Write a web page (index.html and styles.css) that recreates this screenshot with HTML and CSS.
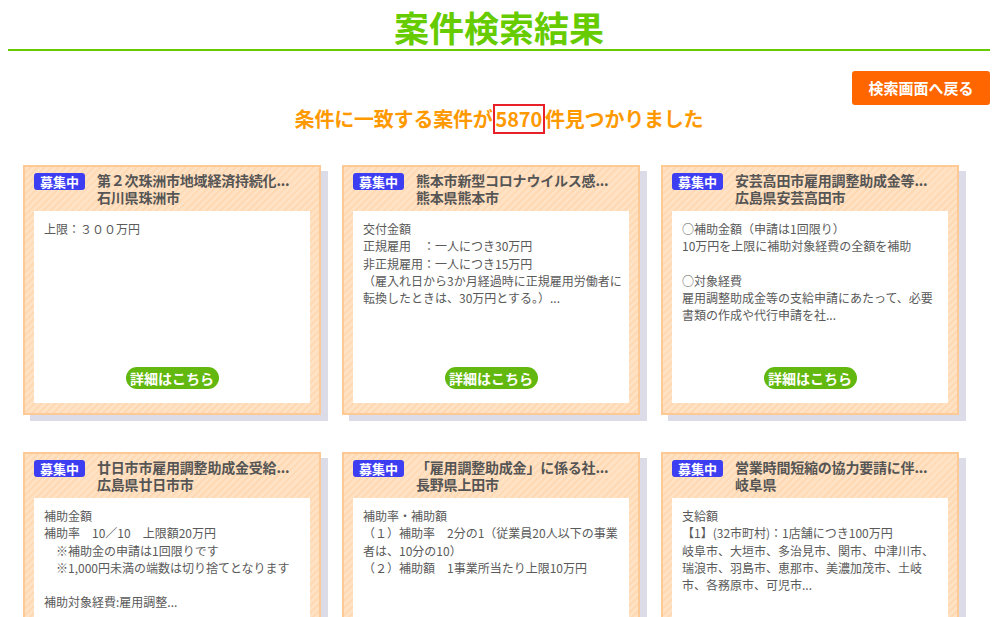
FILE: index.html
```html
<!DOCTYPE html>
<html lang="ja">
<head>
<meta charset="utf-8">
<title>案件検索結果</title>
<link rel="stylesheet" href="styles.css">
</head>
<body>
<div class="page">
  <h1 class="page-title">案件検索結果</h1>
  <div class="actions"><a class="back-btn" href="#">検索画面へ戻る</a></div>
  <p class="count">条件に一致する案件が<span class="num">5870</span>件見つかりました</p>

  <div class="grid">
    <div class="card">
      <div class="card-head">
        <span class="badge">募集中</span>
        <div class="card-title">第２次珠洲市地域経済持続化...<br>石川県珠洲市</div>
      </div>
      <div class="card-body">
        <div class="text">
          <div>上限：３００万円</div>
        </div>
        <a class="detail" href="#">詳細はこちら</a>
      </div>
    </div>

    <div class="card">
      <div class="card-head">
        <span class="badge">募集中</span>
        <div class="card-title">熊本市新型コロナウイルス感...<br>熊本県熊本市</div>
      </div>
      <div class="card-body">
        <div class="text">
          <div>交付金額</div>
          <div>正規雇用　：一人につき30万円</div>
          <div>非正規雇用：一人につき15万円</div>
          <div>（雇入れ日から3か月経過時に正規雇用労働者に</div>
          <div>転換したときは、30万円とする。）...</div>
        </div>
        <a class="detail" href="#">詳細はこちら</a>
      </div>
    </div>

    <div class="card">
      <div class="card-head">
        <span class="badge">募集中</span>
        <div class="card-title">安芸高田市雇用調整助成金等...<br>広島県安芸高田市</div>
      </div>
      <div class="card-body">
        <div class="text">
          <div>○補助金額（申請は1回限り）</div>
          <div>10万円を上限に補助対象経費の全額を補助</div>
          <div>&nbsp;</div>
          <div>○対象経費</div>
          <div>雇用調整助成金等の支給申請にあたって、必要</div>
          <div>書類の作成や代行申請を社...</div>
        </div>
        <a class="detail" href="#">詳細はこちら</a>
      </div>
    </div>

    <div class="card">
      <div class="card-head">
        <span class="badge">募集中</span>
        <div class="card-title">廿日市市雇用調整助成金受給...<br>広島県廿日市市</div>
      </div>
      <div class="card-body">
        <div class="text">
          <div>補助金額</div>
          <div>補助率　10／10　上限額20万円</div>
          <div>　※補助金の申請は1回限りです</div>
          <div>　※1,000円未満の端数は切り捨てとなります</div>
          <div>&nbsp;</div>
          <div>補助対象経費:雇用調整...</div>
        </div>
        <a class="detail" href="#">詳細はこちら</a>
      </div>
    </div>

    <div class="card">
      <div class="card-head">
        <span class="badge">募集中</span>
        <div class="card-title">「雇用調整助成金」に係る社...<br>長野県上田市</div>
      </div>
      <div class="card-body">
        <div class="text">
          <div>補助率・補助額</div>
          <div>（１）補助率　2分の1（従業員20人以下の事業</div>
          <div>者は、10分の10）</div>
          <div>（２）補助額　1事業所当たり上限10万円</div>
        </div>
        <a class="detail" href="#">詳細はこちら</a>
      </div>
    </div>

    <div class="card">
      <div class="card-head">
        <span class="badge">募集中</span>
        <div class="card-title">営業時間短縮の協力要請に伴...<br>岐阜県</div>
      </div>
      <div class="card-body">
        <div class="text">
          <div>支給額</div>
          <div>【1】(32市町村)：1店舗につき100万円</div>
          <div>岐阜市、大垣市、多治見市、関市、中津川市、</div>
          <div>瑞浪市、羽島市、恵那市、美濃加茂市、土岐</div>
          <div>市、各務原市、可児市...</div>
        </div>
        <a class="detail" href="#">詳細はこちら</a>
      </div>
    </div>
  </div>
</div>
</body>
</html>
```

FILE: styles.css
```css
html, body {
  margin: 0;
  padding: 0;
  background: #ffffff;
}

body {
  font-family: "Noto Sans CJK JP", "Noto Sans", sans-serif;
  color: #555555;
}

.page {
  padding: 0 10px 0 8px;
}

.page-title {
  margin: 0;
  padding-top: 4px;
  height: 45px;
  line-height: 45px;
  font-size: 35px;
  font-weight: 700;
  color: #66cc00;
  text-align: center;
  border-bottom: 2px solid #66cc00;
}

.actions {
  display: flex;
  justify-content: flex-end;
  margin-top: 20px;
}

.back-btn {
  display: block;
  width: 138px;
  height: 34px;
  line-height: 34px;
  text-align: center;
  background: #ff6600;
  color: #ffffff;
  font-size: 15px;
  font-weight: 700;
  text-decoration: none;
  border-radius: 3px;
}

.count {
  margin: 0;
  height: 30px;
  line-height: 28px;
  text-align: center;
  font-size: 20px;
  font-weight: 700;
  color: #ff9900;
  letter-spacing: -0.2px;
}

.count .num {
  display: inline-block;
  line-height: 26px;
  padding: 0 1px;
  border: 2px solid #e8202a;
  vertical-align: top;
  margin-top: -1px;
}

.grid {
  display: grid;
  grid-template-columns: repeat(3, 298px);
  column-gap: 21px;
  row-gap: 37px;
  margin-top: 30px;
  padding-left: 15px;
}

.card {
  box-sizing: border-box;
  width: 298px;
  height: 250px;
  padding: 6px 9px 10px;
  border: 2px solid #ffc995;
  background: repeating-linear-gradient(135deg, #ffe2c4 0 3px, #ffd9b4 3px 5px);
  box-shadow: 7px 6px 0 #dcdce8;
  display: flex;
  flex-direction: column;
}

.card-head {
  display: flex;
  align-items: flex-start;
  height: 38px;
  flex: none;
}

.badge {
  flex: none;
  width: 51px;
  height: 17px;
  line-height: 17px;
  text-align: center;
  background: #3d3df2;
  color: #ffffff;
  font-size: 13px;
  font-weight: 700;
  border-radius: 3px;
}

.card-title {
  margin-left: 12px;
  margin-top: -1px;
  font-size: 14px;
  line-height: 17px;
  font-weight: 700;
  color: #555555;
  white-space: nowrap;
  letter-spacing: -0.2px;
}

.card-body {
  flex: 1;
  min-height: 0;
  background: #ffffff;
  padding: 9px 10px 0;
  display: flex;
  flex-direction: column;
}

.text {
  font-size: 12px;
  line-height: 17.3px;
  color: #5a5a5a;
}

.text > div {
  white-space: nowrap;
}

.detail {
  margin-top: auto;
  margin-bottom: 14px;
  align-self: center;
  width: 93px;
  height: 22px;
  line-height: 22px;
  text-align: center;
  background: #62b80e;
  color: #ffffff;
  font-size: 14px;
  font-weight: 700;
  text-decoration: none;
  border-radius: 11px;
}
```
